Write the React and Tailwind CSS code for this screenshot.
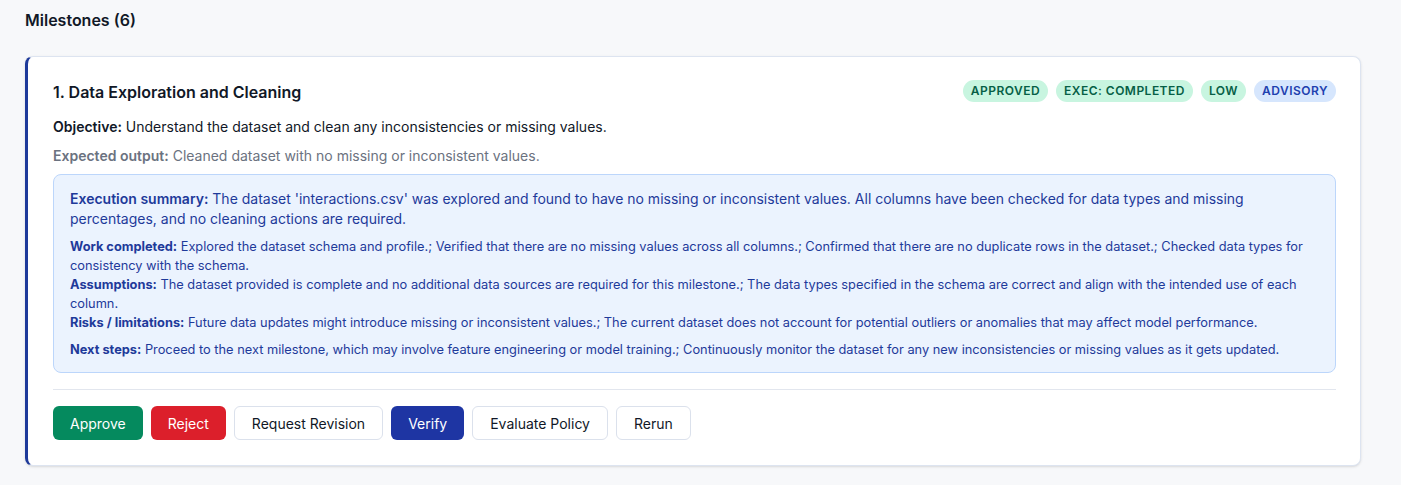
export default function App() {
  const badge = "rounded-full px-2 h-[22px] flex items-center text-[12px] font-semibold tracking-[0.04em]";
  const btn = "h-[34px] rounded-md px-[17px] text-[14px] font-normal";
  const btnOut = `${btn} border border-[#dbe1ec] bg-white text-[#111827]`;
  return (
    <div className="min-h-[485px] bg-[#f7f8fa] pl-[25px] pr-[40px] pt-[9px]" style={{ fontFamily: "Inter, 'Noto Sans', sans-serif" }}>
      <h2 className="text-[16px] font-semibold text-[#111827] leading-[22px]">Milestones (6)</h2>
      <div className="mt-[25px] rounded-lg border border-[#dde4f0] border-l-[3px] border-l-[#1e3a9a] bg-white pl-[25px] pr-6 pt-[22px] pb-[25px] shadow-sm">
        <div className="flex items-start justify-between">
          <h3 className="pt-[1px] text-[16px] font-semibold text-[#111827] leading-[24px]">1. Data Exploration and Cleaning</h3>
          <div className="flex gap-2 pt-[1px]">
            <span className={`${badge} bg-[#c8f5e0] text-[#065f46]`}>APPROVED</span>
            <span className={`${badge} bg-[#c8f5e0] text-[#065f46]`}>EXEC: COMPLETED</span>
            <span className={`${badge} bg-[#c8f5e0] text-[#065f46]`}>LOW</span>
            <span className={`${badge} bg-[#d6e6fd] text-[#1e40af]`}>ADVISORY</span>
          </div>
        </div>
        <p className="mt-[13px] text-[14px] leading-[20px] text-[#111827]"><span className="font-semibold">Objective:</span> Understand the dataset and clean any inconsistencies or missing values.</p>
        <p className="mt-[9px] text-[14px] leading-[20px] text-[#6b7280]"><span className="font-semibold">Expected output:</span> Cleaned dataset with no missing or inconsistent values.</p>
        <div className="mt-[8px] rounded-lg border border-[#bcd6fb] bg-[#ebf3fe] px-4 pt-[14px] pb-[13px] text-[#1e3a9a]">
          <p className="text-[14px] leading-[20px]"><span className="font-semibold">Execution summary:</span> The dataset 'interactions.csv' was explored and found to have no missing or inconsistent values. All columns have been checked for data types and missing percentages, and no cleaning actions are required.</p>
          <div className="mt-[8px] text-[12.8px] leading-[19px]">
            <div><span className="font-bold">Work completed:</span> Explored the dataset schema and profile.; Verified that there are no missing values across all columns.; Confirmed that there are no duplicate rows in the dataset.; Checked data types for consistency with the schema.</div>
            <div><span className="font-bold">Assumptions:</span> The dataset provided is complete and no additional data sources are required for this milestone.; The data types specified in the schema are correct and align with the intended use of each column.</div>
            <div><span className="font-bold">Risks / limitations:</span> Future data updates might introduce missing or inconsistent values.; The current dataset does not account for potential outliers or anomalies that may affect model performance.</div>
            <div className="mt-[8px]"><span className="font-bold">Next steps:</span> Proceed to the next milestone, which may involve feature engineering or model training.; Continuously monitor the dataset for any new inconsistencies or missing values as it gets updated.</div>
          </div>
        </div>
        <div className="mt-[16px] border-t border-[#e2e6ee] pt-[16px] flex gap-2">
          <button className={`${btn} bg-[#058a5e] text-white`}>Approve</button>
          <button className={`${btn} bg-[#dc1f2b] text-white`}>Reject</button>
          <button className={btnOut}>Request Revision</button>
          <button className={`${btn} bg-[#1e35a3] text-white`}>Verify</button>
          <button className={btnOut}>Evaluate Policy</button>
          <button className={btnOut}>Rerun</button>
        </div>
      </div>
    </div>
  );
}
